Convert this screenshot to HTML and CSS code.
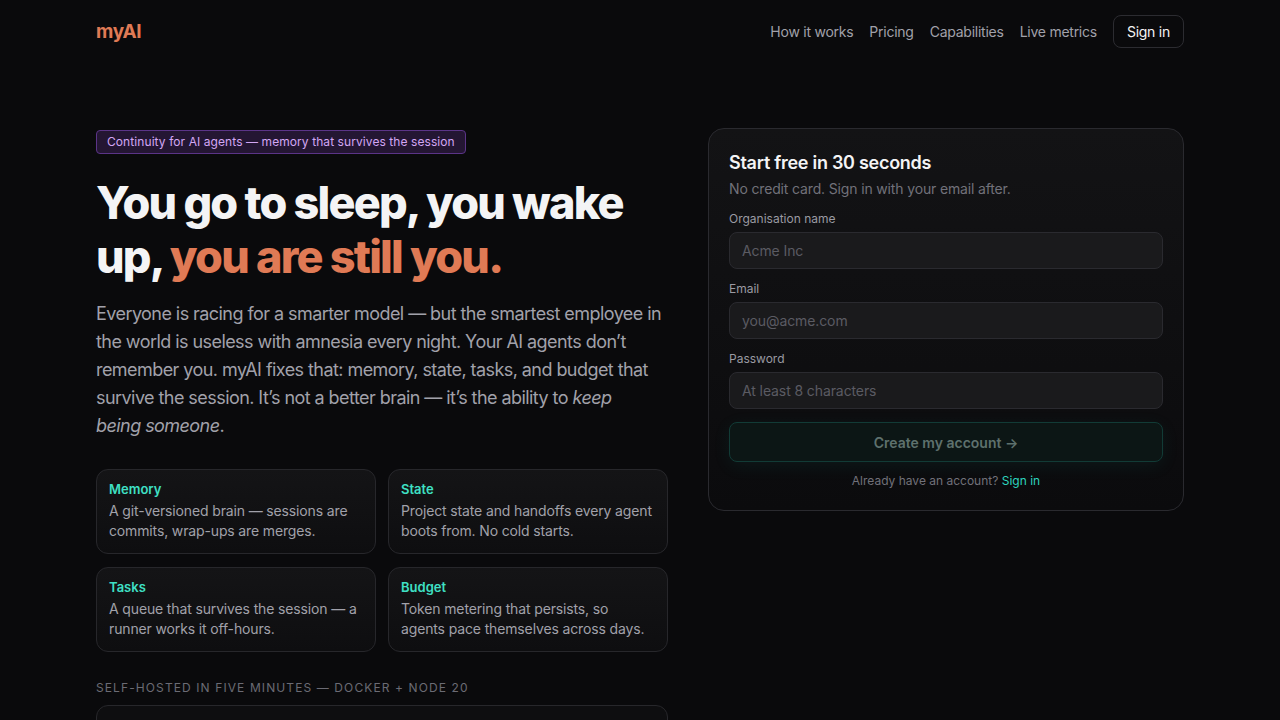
FILE: index.html
```html
<!DOCTYPE html>
<html lang="en">
<head>
<meta charset="utf-8">
<title>myAI — Continuity for AI agents</title>
<link rel="stylesheet" href="styles.css">
</head>
<body>
<header class="topbar">
  <a class="logo" href="#">myAI</a>
  <nav class="nav">
    <a href="#">How it works</a>
    <a href="#">Pricing</a>
    <a href="#">Capabilities</a>
    <a href="#">Live metrics</a>
    <a class="nav-btn" href="#">Sign in</a>
  </nav>
</header>
<main class="hero">
  <section class="hero-left">
    <span class="badge">Continuity for AI agents — memory that survives the session</span>
    <h1 class="headline">You go to sleep, you wake up, <span class="accent">you are still you.</span></h1>
    <p class="lede">Everyone is racing for a smarter model — but the smartest employee in the world is useless with amnesia every night. Your AI agents don’t remember you. myAI fixes that: memory, state, tasks, and budget that survive the session. It’s not a better brain — it’s the ability to <em>keep being&nbsp;someone</em>.</p>
    <div class="features">
      <div class="feature">
        <div class="feature-title">Memory</div>
        <div class="feature-text">A git-versioned brain — sessions are commits, wrap-ups are merges.</div>
      </div>
      <div class="feature">
        <div class="feature-title">State</div>
        <div class="feature-text">Project state and handoffs every agent boots from. No cold starts.</div>
      </div>
      <div class="feature">
        <div class="feature-title">Tasks</div>
        <div class="feature-text">A queue that survives the session — a runner works it off-hours.</div>
      </div>
      <div class="feature">
        <div class="feature-title">Budget</div>
        <div class="feature-text">Token metering that persists, so agents pace themselves across days.</div>
      </div>
    </div>
    <div class="section-label">Self-hosted in five minutes — Docker + Node 20</div>
    <div class="code-box"></div>
  </section>
  <section class="hero-right">
    <form class="signup">
      <h2 class="signup-title">Start free in 30 seconds</h2>
      <p class="signup-sub">No credit card. Sign in with your email after.</p>
      <div class="fields">
        <label class="field">
          <span class="field-label">Organisation name</span>
          <input class="input" type="text" placeholder="Acme Inc">
        </label>
        <label class="field">
          <span class="field-label">Email</span>
          <input class="input" type="email" placeholder="you@acme.com">
        </label>
        <label class="field">
          <span class="field-label">Password</span>
          <input class="input" type="password" placeholder="At least 8 characters">
        </label>
      </div>
      <button class="submit" type="button">Create my account →</button>
      <p class="signin-line">Already have an account? <a href="#">Sign in</a></p>
    </form>
  </section>
</main>
</body>
</html>
```

FILE: styles.css
```css
* { box-sizing: border-box; }
html, body { margin: 0; padding: 0; }
body {
  background: #0a0a0c;
  color: #e4e4e7;
  font-family: Inter, "Noto Sans", "Liberation Sans", sans-serif;
  -webkit-font-smoothing: antialiased;
}
a { text-decoration: none; color: inherit; }

.topbar {
  width: 1088px;
  margin: 0 auto;
  height: 63px;
  display: flex;
  align-items: center;
  justify-content: space-between;
}
.logo {
  color: #e07a55;
  font-weight: 700;
  font-size: 19px;
  letter-spacing: -0.02em;
}
.nav {
  display: flex;
  align-items: center;
  gap: 16px;
  font-size: 14px;
  letter-spacing: -0.25px;
  color: #a1a1aa;
}
.nav a { line-height: 19px; }
.nav .nav-btn {
  color: #f4f4f5;
  border: 1px solid #2c2c31;
  border-radius: 8px;
  padding: 6px 13px;
}

.hero {
  width: 1088px;
  margin: 0 auto;
  padding-top: 65px;
  display: grid;
  grid-template-columns: 572px 476px;
  column-gap: 40px;
  align-items: start;
}

.hero-left { padding-top: 2px; }
.badge {
  display: inline-block;
  font-size: 12px;
  line-height: 16px;
  letter-spacing: 0.08px;
  padding: 3px 10px;
  color: #d3a6f5;
  background: #241633;
  border: 1px solid #5b3488;
  border-radius: 4px;
}
.headline {
  margin: 22px 0 0;
  font-size: 45px;
  line-height: 54px;
  font-weight: 800;
  letter-spacing: -0.04em;
  color: #f4f4f5;
}
.accent { color: #e07a55; }
.lede {
  margin: 16px 0 0;
  font-size: 18px;
  line-height: 28px;
  letter-spacing: -0.56px;
  color: #a1a1aa;
}
.lede em { font-style: italic; }

.features {
  margin-top: 29px;
  display: grid;
  grid-template-columns: 1fr 1fr;
  gap: 13px 12px;
}
.feature {
  border: 1px solid #27272b;
  border-radius: 12px;
  background: linear-gradient(180deg, #141416 0%, #0e0e10 100%);
  padding: 11px 12px 12px;
  height: 85px;
}
.feature-title {
  color: #3fe0c5;
  font-size: 13px;
  font-weight: 600;
  line-height: 16px;
}
.feature-text {
  margin-top: 4px;
  font-size: 14px;
  line-height: 20px;
  letter-spacing: -0.14px;
  color: #a1a1aa;
}

.section-label {
  margin-top: 28px;
  font-size: 12px;
  line-height: 16px;
  letter-spacing: 1.1px;
  text-transform: uppercase;
  color: #6b6b74;
}
.code-box {
  margin-top: 9px;
  height: 120px;
  border: 1px solid #27272b;
  border-radius: 12px;
  background: #0e0e10;
}

.signup {
  display: block;
  border: 1px solid #2a2a2f;
  border-radius: 16px;
  background: linear-gradient(180deg, #131315 0%, #0b0b0d 100%);
  padding: 20px 20px 21px;
  margin: 0;
}
.signup-title {
  margin: 0;
  font-size: 18px;
  line-height: 28px;
  font-weight: 600;
  color: #f4f4f5;
  letter-spacing: -0.015em;
}
.signup-sub {
  margin: 2px 0 0;
  font-size: 14px;
  line-height: 20px;
  letter-spacing: -0.15px;
  color: #71717a;
}
.fields {
  margin-top: 12px;
  display: flex;
  flex-direction: column;
  gap: 12px;
}
.field { display: flex; flex-direction: column; gap: 5px; }
.field-label {
  font-size: 12px;
  line-height: 16px;
  color: #9a9aa2;
}
.input {
  height: 37px;
  border: 1px solid #2a2a2f;
  border-radius: 8px;
  background: #1a1a1c;
  padding: 0 12px;
  font-family: inherit;
  font-size: 14px;
  letter-spacing: -0.1px;
  color: #e4e4e7;
  outline: none;
}
.input::placeholder { color: #5b5b63; }
.submit {
  display: block;
  width: 100%;
  margin-top: 13px;
  height: 40px;
  border: 1px solid #123b36;
  border-radius: 8px;
  background: #0c1615;
  color: #5e716d;
  font-family: inherit;
  font-size: 14px;
  font-weight: 600;
  box-shadow: 0 4px 18px rgba(20, 184, 166, 0.08);
}
.signin-line {
  margin: 11px 0 0;
  text-align: center;
  font-size: 12px;
  line-height: 16px;
  color: #71717a;
}
.signin-line a { color: #2dd4bf; }
```
